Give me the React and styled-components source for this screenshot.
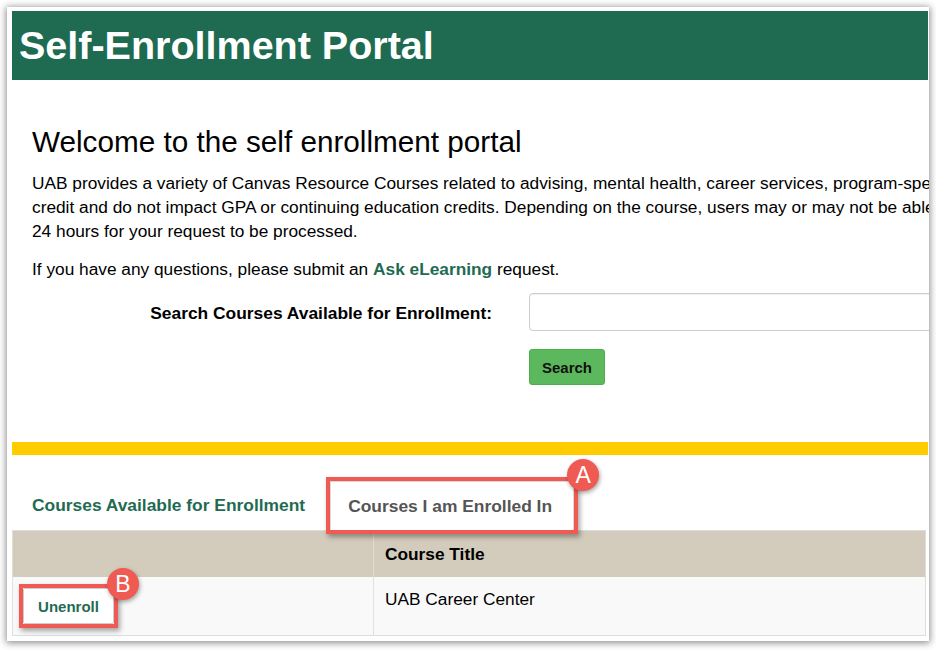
import React from "react";
import styled, { createGlobalStyle } from "styled-components";

const Global = createGlobalStyle`
  html, body { margin: 0; padding: 0; background: #ffffff; }
  body { font-family: "Liberation Sans", Arial, sans-serif; color: #000; }
  * { box-sizing: border-box; }
`;

const GREEN = "#1f6b52";
const RED = "#ef5a52";

const Stage = styled.div`
  width: 936px;
  height: 650px;
  padding: 7px 7px 0 7px;
  overflow: hidden;
`;

const Window = styled.div`
  width: 922px;
  height: 634px;
  background: #fff;
  padding: 4px 1px 0 5px;
  box-shadow: 0 1px 7px 1px rgba(0, 0, 0, 0.45);
  overflow: hidden;
`;

const Content = styled.div`
  width: 916px;
  display: flex;
  flex-direction: column;
`;

const Header = styled.header`
  height: 69px;
  background: ${GREEN};
  display: flex;
  align-items: center;
  padding-left: 7px;
`;

const Title = styled.h1`
  margin: 0;
  color: #fff;
  font-size: 39.5px;
  font-weight: 700;
  line-height: 1;
`;

const Main = styled.main`
  padding: 45px 0 0 20px;
`;

const Welcome = styled.h2`
  margin: 0 0 13px;
  font-size: 29.7px;
  font-weight: 400;
  line-height: 33px;
`;

const Para = styled.p`
  margin: 0 0 ${(p) => (p.$last ? 0 : 14)}px;
  font-size: 17.3px;
  line-height: 24px;
  white-space: nowrap;
`;

const Link = styled.a`
  color: ${GREEN};
  font-weight: 700;
  text-decoration: none;
`;

const Form = styled.form`
  display: grid;
  grid-template-columns: 480px 500px;
  column-gap: 37px;
  row-gap: 18px;
  align-items: center;
  margin: 12px 0 0 -20px;
`;

const Label = styled.label`
  text-align: right;
  font-size: 17.4px;
  font-weight: 700;
  padding-top: 3px;
`;

const Input = styled.input`
  height: 38px;
  width: 500px;
  border: 1px solid #cccccc;
  border-radius: 4px;
  box-shadow: inset 0 1px 1px rgba(0, 0, 0, 0.06);
`;

const SearchButton = styled.button`
  justify-self: start;
  width: 76px;
  height: 36px;
  background: #5cb85c;
  border: 1px solid #4cae4c;
  border-radius: 3px;
  font-family: inherit;
  font-size: 15px;
  font-weight: 700;
  color: #111;
`;

const GoldBar = styled.div`
  height: 13px;
  background: #ffcc00;
  margin-top: 57px;
`;

const Tabs = styled.nav`
  height: 75px;
  display: flex;
  align-items: flex-end;
  gap: 5px;
`;

const Tab = styled.div`
  height: 49px;
  display: flex;
  align-items: center;
  font-size: 17.4px;
  font-weight: 700;
  padding: ${(p) => (p.$active ? "0 21px 0 17px" : "0 20px")};
  color: ${(p) => (p.$active ? "#555555" : GREEN)};
  background: ${(p) => (p.$active ? "#fff" : "transparent")};
  border: ${(p) => (p.$active ? "1px solid #d8d8d8" : "none")};
  border-bottom: none;
`;

const Annotated = styled.div`
  position: relative;
  display: ${(p) => (p.$inline ? "inline-flex" : "flex")};
  box-shadow: 0 0 0 4px ${RED}, 2px 3px 5px 4px rgba(0, 0, 0, 0.35);
`;

const Badge = styled.span`
  position: absolute;
  top: ${(p) => p.$top}px;
  right: ${(p) => p.$right}px;
  width: 32px;
  height: 32px;
  border-radius: 50%;
  background: ${RED};
  color: #fff;
  font-size: 23px;
  font-weight: 400;
  display: flex;
  align-items: center;
  justify-content: center;
  box-shadow: 1px 2px 4px rgba(0, 0, 0, 0.35);
  z-index: 2;
`;

const Table = styled.table`
  width: 914px;
  border-collapse: collapse;
  border: 1px solid #dddddd;
  font-size: 17.3px;
`;

const Th = styled.th`
  background: #d3cbbb;
  text-align: left;
  font-weight: 700;
  line-height: 24px;
  padding: 11px 11px;
  border-left: 1px solid #e2ddd2;
  width: ${(p) => p.$w || "auto"};
`;

const Td = styled.td`
  background: #f9f9f9;
  line-height: 24px;
  padding: ${(p) => (p.$action ? "11px 10px" : "10px 11px 24px")};
  border-left: 1px solid #e1e1e1;
  vertical-align: top;
`;

const UnenrollButton = styled.button`
  width: 91px;
  height: 36px;
  background: #fff;
  border: 1px solid #cccccc;
  border-radius: 2px;
  font-family: inherit;
  font-size: 15px;
  font-weight: 700;
  color: ${GREEN};
`;

export default function App() {
  return (
    <>
      <Global />
      <Stage>
        <Window>
          <Content>
            <Header>
              <Title>Self-Enrollment Portal</Title>
            </Header>
            <Main>
              <Welcome>Welcome to the self enrollment portal</Welcome>
              <Para>
                UAB provides a variety of Canvas Resource Courses related to advising, mental health, career services, program-specific information, and more. These courses do not carry academic
                <br />
                credit and do not impact GPA or continuing education credits. Depending on the course, users may or may not be able to self-unenroll. Please allow up to
                <br />
                24 hours for your request to be processed.
              </Para>
              <Para $last>
                If you have any questions, please submit an <Link href="#">Ask eLearning</Link> request.
              </Para>
              <Form onSubmit={(e) => e.preventDefault()}>
                <Label htmlFor="q">Search Courses Available for Enrollment:</Label>
                <Input id="q" type="text" />
                <span />
                <SearchButton type="submit">Search</SearchButton>
              </Form>
            </Main>
            <GoldBar />
            <Tabs>
              <Tab>Courses Available for Enrollment</Tab>
              <Annotated>
                <Tab $active>Courses I am Enrolled In</Tab>
                <Badge $top={-22} $right={-25}>A</Badge>
              </Annotated>
            </Tabs>
            <Table>
              <thead>
                <tr>
                  <Th $w="361px"></Th>
                  <Th>Course Title</Th>
                </tr>
              </thead>
              <tbody>
                <tr>
                  <Td $action>
                    <Annotated $inline>
                      <UnenrollButton>Unenroll</UnenrollButton>
                      <Badge $top={-20} $right={-25}>B</Badge>
                    </Annotated>
                  </Td>
                  <Td>UAB Career Center</Td>
                </tr>
              </tbody>
            </Table>
          </Content>
        </Window>
      </Stage>
    </>
  );
}
